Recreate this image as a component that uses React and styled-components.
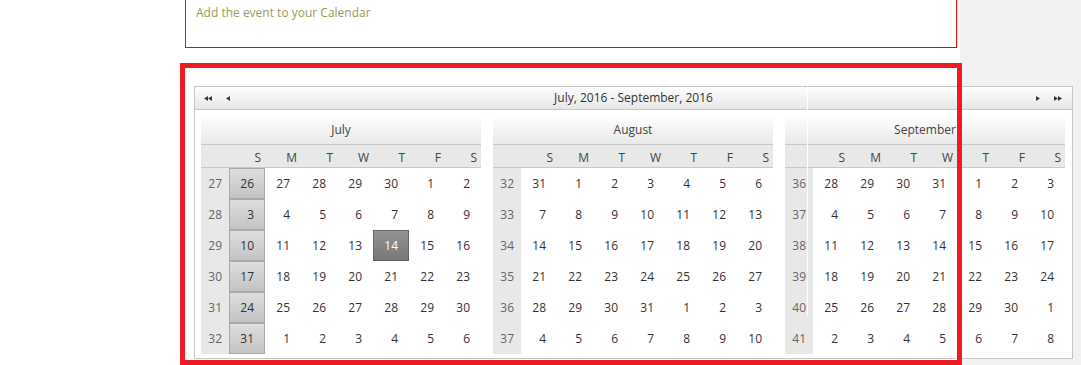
import React from 'react';
import styled, { createGlobalStyle } from 'styled-components';

const Global = createGlobalStyle`
  html, body { margin: 0; padding: 0; }
  body { font-family: "Open Sans", "Liberation Sans", sans-serif; background: #fff; }
`;

const Page = styled.div`
  position: relative;
  width: 1081px;
  height: 365px;
  overflow: hidden;
  background: linear-gradient(to right, #fff 0, #fff 960px, #f0f1f3 960px);
  display: flex;
  flex-direction: column;
`;

const NoticeBox = styled.div`
  margin-left: 185px;
  width: 772px;
  height: 48px;
  box-sizing: border-box;
  border: 1px solid #ff0000;
  border-top: none;
  background: #fff;
  padding: 4px 0 0 10px;
  font-size: 12px;
  line-height: 18px;
  color: #9c9b55;
`;

const Calendar = styled.div`
  margin: 38px 0 0 194px;
  width: 879px;
  box-sizing: border-box;
  border: 1px solid #c6c6c6;
  background: #fff;
  color: #333;
  font-size: 12px;
`;

const NavBar = styled.div`
  height: 22px;
  border-bottom: 1px solid #c9c9c9;
  background: linear-gradient(#fefefe, #e7e7e7);
  display: flex;
  align-items: center;
  padding: 0 9px;
`;

const NavGroup = styled.div`
  display: flex;
  align-items: center;
  gap: ${p => p.$gap}px;
  width: 28px;
  justify-content: ${p => (p.$right ? 'flex-end' : 'flex-start')};
`;

const NavTitle = styled.div`
  flex: 1;
  text-align: center;
  color: #333;
  line-height: 22px;
`;

const Months = styled.div`
  display: flex;
  gap: 12px;
  padding: 6px 6px 4px;
`;

const Month = styled.div`
  width: 280px;
`;

const MonthTitle = styled.div`
  height: 28px;
  line-height: 28px;
  text-align: center;
  color: #444;
  background: linear-gradient(#fefefe, #e9e9e9);
  border-bottom: 1px solid #c8c8c8;
`;

const Grid = styled.div`
  display: grid;
  grid-template-columns: 28px repeat(7, 36px);
`;

const DayNames = styled(Grid)`
  height: 22px;
  background: #e8e8e8;
  border-bottom: 1px solid #c8c8c8;
`;

const DayName = styled.div`
  text-align: right;
  padding-right: 4px;
  line-height: 22px;
  padding-top: 2px;
  color: #444;
`;

const WeekNum = styled.div`
  height: 31px;
  line-height: 31px;
  text-align: right;
  padding-right: 7px;
  background: #e8e8e8;
  color: #666;
`;

const Day = styled.div`
  height: 31px;
  box-sizing: border-box;
  line-height: 29px;
  text-align: right;
  padding-right: 10px;
  border: 1px solid transparent;
  color: ${p => (p.$selected ? '#fff' : '#333')};
  ${p =>
    p.$week &&
    `
    background: linear-gradient(#dedede, #c3c3c3);
    border-color: #a9a9a9;
  `}
  ${p =>
    p.$selected &&
    `
    background: linear-gradient(#939393, #777);
    border-color: #646464;
  `}
`;

const Highlight = styled.div`
  position: absolute;
  left: 180px;
  top: 63px;
  width: 782px;
  height: 302px;
  box-sizing: border-box;
  border: 5px solid #ed1c24;
  pointer-events: none;
`;

const Seam = styled.div`
  position: absolute;
  left: 807px;
  top: 86px;
  width: 1px;
  height: 230px;
  background: #fff;
`;

const Arrow = ({ dir, double }) => {
  const tri = dir === 'left' ? 'M4 0 L4 5 L0 2.5 Z' : 'M0 0 L0 5 L4 2.5 Z';
  return (
    <svg width={double ? 9 : 5} height="5" viewBox={`0 0 ${double ? 9 : 5} 5`}>
      <path d={tri} fill="#2d3a4a" />
      {double && <path d={tri} transform="translate(4 0)" fill="#2d3a4a" />}
    </svg>
  );
};

const range = (a, b) => Array.from({ length: b - a + 1 }, (_, i) => a + i);

const months = [
  {
    name: 'July',
    weeks: [
      [27, [26, 27, 28, 29, 30, 1, 2]],
      [28, range(3, 9)],
      [29, range(10, 16)],
      [30, range(17, 23)],
      [31, range(24, 30)],
      [32, [31, 1, 2, 3, 4, 5, 6]],
    ],
    highlightSunday: true,
    selected: 14,
  },
  {
    name: 'August',
    weeks: [
      [32, [31, 1, 2, 3, 4, 5, 6]],
      [33, range(7, 13)],
      [34, range(14, 20)],
      [35, range(21, 27)],
      [36, [28, 29, 30, 31, 1, 2, 3]],
      [37, range(4, 10)],
    ],
  },
  {
    name: 'September',
    weeks: [
      [36, [28, 29, 30, 31, 1, 2, 3]],
      [37, range(4, 10)],
      [38, range(11, 17)],
      [39, range(18, 24)],
      [40, [25, 26, 27, 28, 29, 30, 1]],
      [41, range(2, 8)],
    ],
  },
];

const dayNames = ['S', 'M', 'T', 'W', 'T', 'F', 'S'];

export default function App() {
  return (
    <>
      <Global />
      <Page>
        <NoticeBox>Add the event to your Calendar</NoticeBox>
        <Calendar>
          <NavBar>
            <NavGroup $gap={13}>
              <Arrow dir="left" double />
              <Arrow dir="left" />
            </NavGroup>
            <NavTitle>July, 2016 - September, 2016</NavTitle>
            <NavGroup $gap={13} $right>
              <Arrow dir="right" />
              <Arrow dir="right" double />
            </NavGroup>
          </NavBar>
          <Months>
            {months.map(m => (
              <Month key={m.name}>
                <MonthTitle>{m.name}</MonthTitle>
                <DayNames>
                  <DayName />
                  {dayNames.map((d, i) => (
                    <DayName key={i}>{d}</DayName>
                  ))}
                </DayNames>
                {m.weeks.map(([wn, days]) => (
                  <Grid key={wn}>
                    <WeekNum>{wn}</WeekNum>
                    {days.map((d, i) => (
                      <Day
                        key={i}
                        $week={m.highlightSunday && i === 0}
                        $selected={m.selected === d && i === 4 && wn === 29}
                      >
                        {d}
                      </Day>
                    ))}
                  </Grid>
                ))}
              </Month>
            ))}
          </Months>
        </Calendar>
        <Seam />
        <Highlight />
      </Page>
    </>
  );
}
